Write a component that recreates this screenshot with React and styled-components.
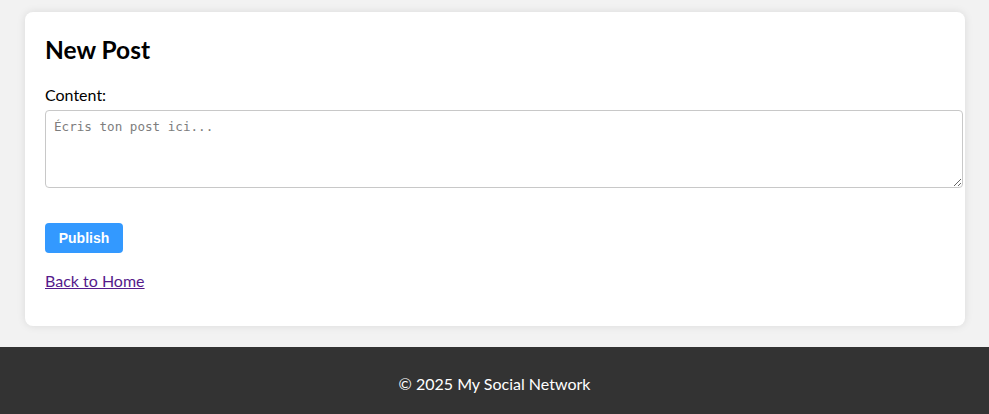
import React from 'react';
import styled, { createGlobalStyle } from 'styled-components';

const GlobalStyle = createGlobalStyle`
  html, body {
    margin: 0;
    padding: 0;
    background: #f2f2f2;
    font-family: 'Segoe UI', Lato, 'Noto Sans', sans-serif;
  }
`;

const Main = styled.main`
  padding: 12px 24px 21px 25px;
`;

const Card = styled.div`
  background: #fff;
  border-radius: 8px;
  box-shadow: 0 0 8px rgba(0, 0, 0, 0.1);
  padding: 20px 20px 34px 20px;
`;

const Title = styled.h2`
  font-size: 24.5px;
  font-weight: 700;
  line-height: 32px;
  margin: 0 0 18px 0;
  padding-top: 2px;
  color: #000;
`;

const Label = styled.label`
  display: block;
  font-size: 16px;
  line-height: 22px;
  margin-bottom: 4px;
  color: #000;
`;

const TextArea = styled.textarea`
  display: block;
  width: 100%;
  height: 60px;
  padding: 8px;
  border: 1px solid #c8c8c8;
  border-radius: 4px;
  font-family: 'DejaVu Sans Mono', 'Liberation Mono', monospace;
  font-size: 12.6px;
  line-height: 15px;
  margin: 0 0 35px 0;

  &::placeholder {
    color: #7d7d7d;
  }
`;

const Button = styled.button`
  display: block;
  width: 78px;
  height: 30px;
  background: #3399ff;
  color: #fff;
  border: none;
  border-radius: 4px;
  font-family: 'Liberation Sans', Arial, sans-serif;
  font-weight: 700;
  font-size: 14px;
  cursor: pointer;
`;

const BackLink = styled.a`
  display: inline-block;
  margin-top: 17px;
  font-size: 16px;
  line-height: 22px;
  color: #551a8b;
  text-decoration: underline;
`;

const Footer = styled.footer`
  background: #333;
  color: #fff;
  text-align: center;
  font-size: 16px;
  line-height: 22px;
  padding: 26px 0 19px;
`;

function App() {
  return (
    <>
      <GlobalStyle />
      <Main>
        <Card>
          <Title>New Post</Title>
          <form onSubmit={(e) => e.preventDefault()}>
            <Label htmlFor="content">Content:</Label>
            <TextArea id="content" placeholder="Écris ton post ici..." />
            <Button type="submit">Publish</Button>
          </form>
          <BackLink href="#">Back to Home</BackLink>
        </Card>
      </Main>
      <Footer>© 2025 My Social Network</Footer>
    </>
  );
}

export default App;
